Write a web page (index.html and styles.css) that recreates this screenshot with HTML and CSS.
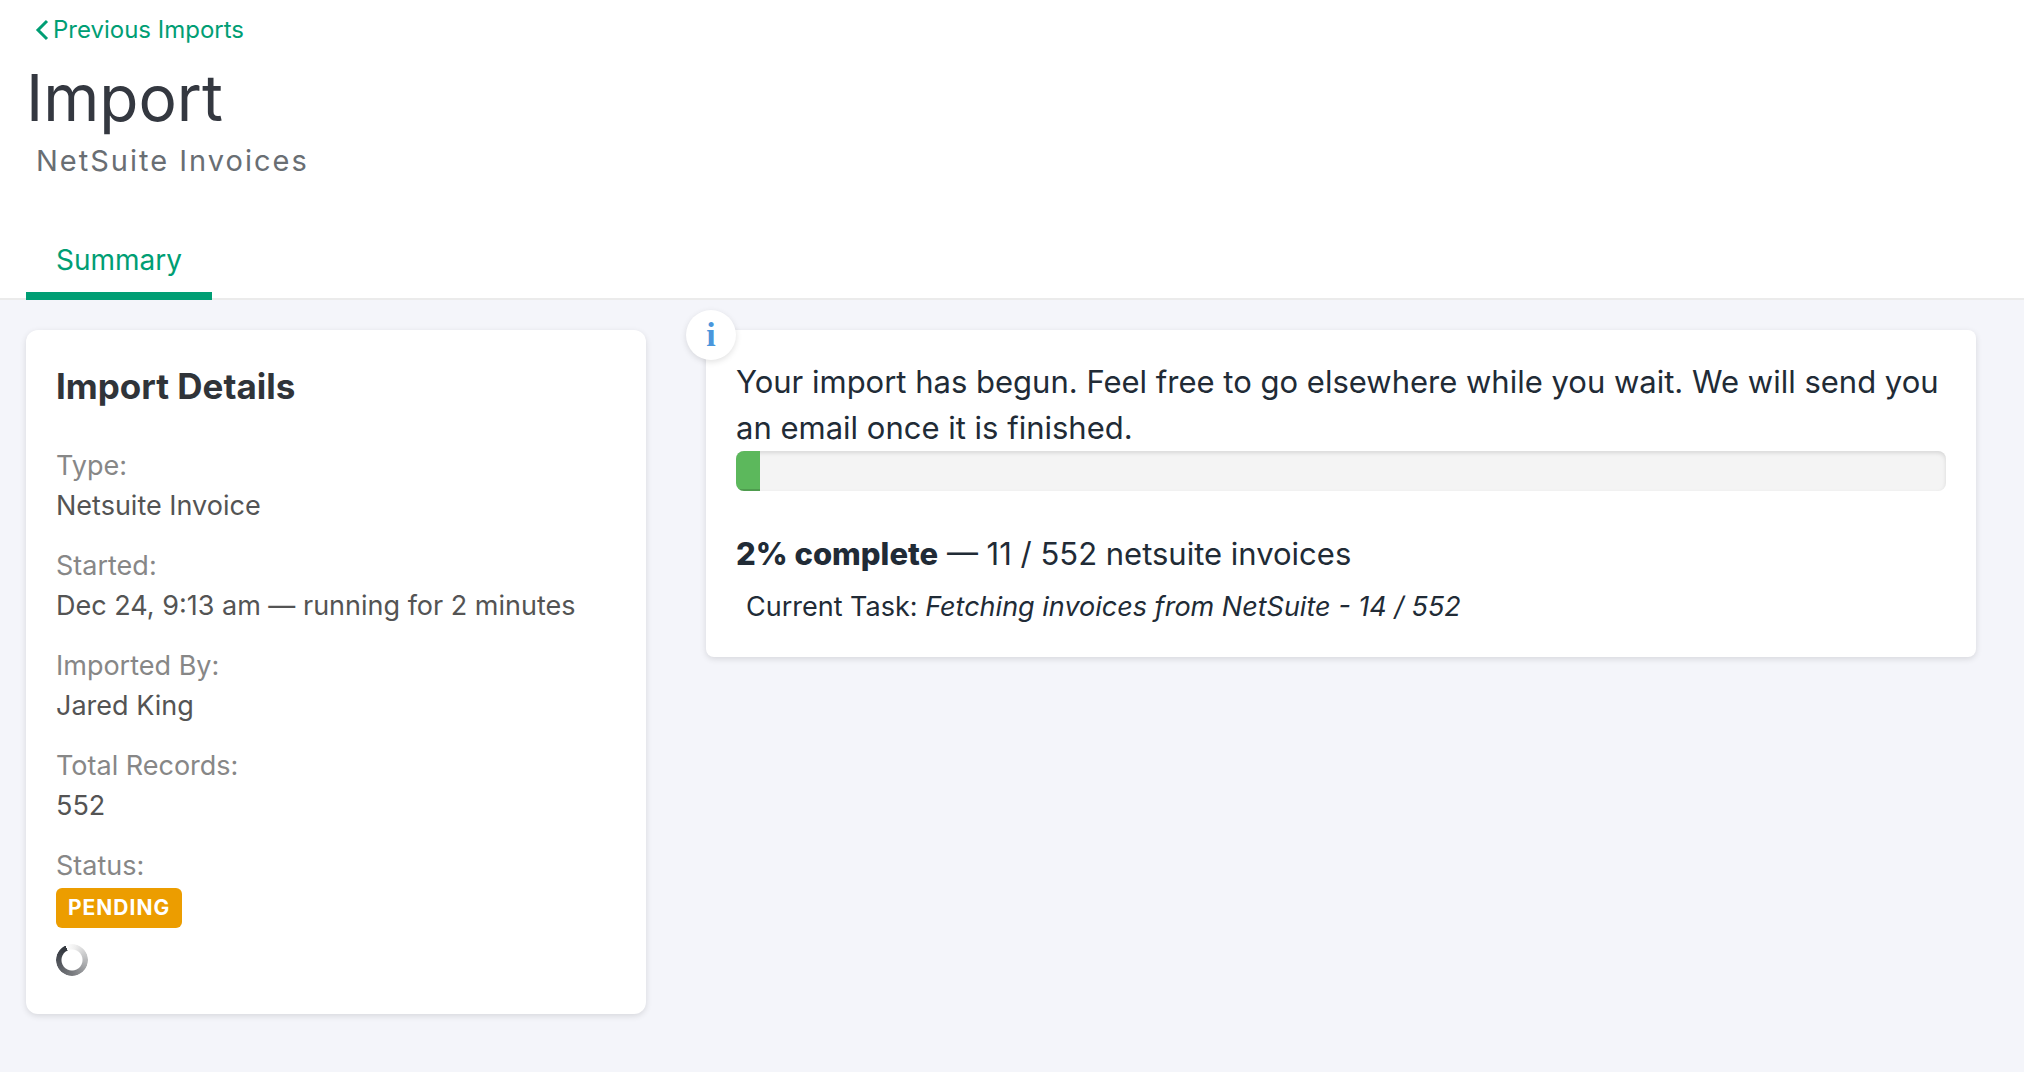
FILE: index.html
```html
<!DOCTYPE html>
<html lang="en">
<head>
<meta charset="utf-8">
<title>Import</title>
<meta name="viewport" content="width=device-width, initial-scale=1">
<link rel="stylesheet" href="styles.css">
</head>
<body>
<header class="page-header">
  <a class="back-link" href="#">
    <svg class="back-icon" viewBox="0 0 14 22" aria-hidden="true"><path d="M12 2 3 11l9 9"/></svg>
    <span>Previous Imports</span>
  </a>
  <h1 class="page-title">Import</h1>
  <p class="page-subtitle">NetSuite Invoices</p>
  <nav class="tabs">
    <a class="tab" href="#" aria-current="page">Summary</a>
  </nav>
</header>
<main class="content">
  <section class="card details">
    <h2 class="card-title">Import Details</h2>
    <dl class="detail-list">
      <div><dt>Type:</dt><dd>Netsuite Invoice</dd></div>
      <div><dt>Started:</dt><dd>Dec 24, 9:13 am — running for 2 minutes</dd></div>
      <div><dt>Imported By:</dt><dd>Jared King</dd></div>
      <div><dt>Total Records:</dt><dd>552</dd></div>
      <div><dt>Status:</dt><dd class="status"><span class="badge">PENDING</span></dd></div>
    </dl>
    <div class="spinner"></div>
  </section>
  <section class="card notice">
    <span class="info-mark">i</span>
    <p class="message">Your import has begun. Feel free to go elsewhere while you wait. We will send you an email once it is finished.</p>
    <div class="progress"><div class="progress-bar" style="width: 2%"></div></div>
    <p class="message"><strong>2% complete</strong> — 11 / 552 netsuite invoices</p>
    <p class="task">Current Task: <em>Fetching invoices from NetSuite - 14 / 552</em></p>
  </section>
</main>
</body>
</html>
```
FILE: styles.css
```css
* {
  box-sizing: border-box;
}

body {
  margin: 0;
  background: #f4f5fa;
  color: #212b36;
  font-family: Inter, "Liberation Sans", sans-serif;
  font-size: 27px;
  line-height: 40px;
}

h1, h2, p, dl, dd {
  margin: 0;
  font-weight: 400;
}

a {
  color: #009e74;
  text-decoration: none;
}

.page-header {
  padding: 12px 26px 0;
  background: #fff;
  border-bottom: 2px solid #ebebeb;
}

.back-link {
  display: flex;
  align-items: center;
  gap: 4px;
  padding-left: 9px;
  font-size: 24px;
  line-height: 36px;
}

.back-icon {
  width: 14px;
  height: 22px;
  fill: none;
  stroke: currentColor;
  stroke-width: 3;
}

.page-title {
  color: #343840;
  font-size: 64px;
  line-height: 84px;
  margin-top: 8px;
}

.page-subtitle {
  padding-left: 10px;
  color: #696e73;
  font-size: 29px;
  line-height: 42px;
  letter-spacing: 2px;
}

.tabs {
  display: flex;
  margin-top: 50px;
  margin-bottom: -2px;
}

.tab {
  padding: 8px 30px 12px;
  border-bottom: 8px solid #009e74;
  font-size: 28px;
}

.content {
  display: grid;
  grid-template-columns: 620fr 1270fr;
  align-items: start;
  gap: 60px;
  padding: 30px 48px 56px 26px;
}

.card {
  background: #fff;
  border-radius: 12px;
  box-shadow: 0 2px 6px rgba(0, 0, 0, 0.12);
}

.details {
  padding: 36px 30px 38px;
}

.card-title {
  color: #303439;
  font-size: 35px;
  font-weight: 700;
  line-height: 40px;
}

.detail-list {
  display: grid;
  gap: 20px;
  margin-top: 40px;
}

dt {
  color: #878787;
}

dd {
  color: #545454;
}

.status {
  display: flex;
  padding-top: 2px;
}

.badge {
  padding: 0 12px;
  border-radius: 6px;
  background: #ec9d00;
  color: #fff;
  font-size: 21px;
  font-weight: 700;
  letter-spacing: 1px;
}

.spinner {
  width: 32px;
  height: 32px;
  margin-top: 16px;
  border-radius: 50%;
  background: conic-gradient(from -25deg, #fff 0deg, #eee 40deg, #7a7c80 200deg, #343840 345deg, #343840 360deg);
  mask: radial-gradient(circle, transparent 10px, #000 11px);
}

.notice {
  position: relative;
  padding: 29px 30px 30px;
  border-radius: 8px;
}

.info-mark {
  position: absolute;
  top: -20px;
  left: -20px;
  width: 50px;
  height: 50px;
  border-radius: 50%;
  background: #fff;
  box-shadow: 0 2px 6px rgba(0, 0, 0, 0.12);
  color: #4a96dc;
  font: bold 34px/50px "Liberation Serif", serif;
  text-align: center;
}

.message {
  font-size: 31px;
  line-height: 46px;
}

.message strong {
  font-weight: 800;
}

.progress {
  height: 40px;
  margin-bottom: 40px;
  overflow: hidden;
  border-radius: 8px;
  background: #f4f4f4;
  box-shadow: inset 0 2px 4px rgba(0, 0, 0, 0.12);
}

.progress-bar {
  height: 100%;
  background: #5cb85c;
  box-shadow: inset 0 -2px 0 rgba(0, 0, 0, 0.15);
}

.task {
  margin-top: 10px;
  padding-left: 10px;
}
```
